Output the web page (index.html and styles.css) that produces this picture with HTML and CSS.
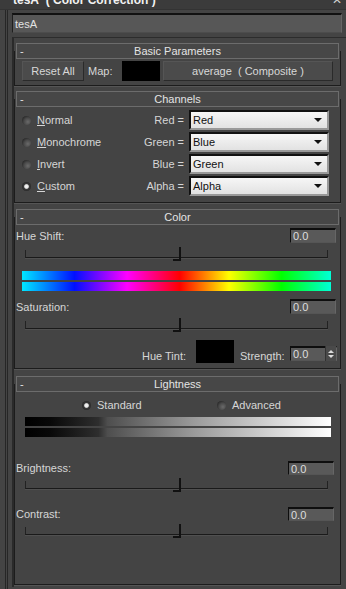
FILE: index.html
```html
<!DOCTYPE html>
<html>
<head>
<meta charset="utf-8">
<link rel="stylesheet" href="styles.css">
</head>
<body>
<div class="titlebar"><span class="title">tesA&nbsp; ( Color Correction )</span><span class="close">✕</span></div>
<div class="namefield">tesA</div>
<div class="panel">

  <div class="rollout r-basic">
    <div class="rhead"><span class="minus">-</span>Basic Parameters</div>
    <div class="basic-row">
      <div class="btn reset">Reset All</div>
      <span class="maplbl">Map:</span>
      <div class="swatch mapsw"></div>
      <div class="btn mapbtn">average&nbsp; ( Composite )</div>
    </div>
  </div>

  <div class="rollout r-chan">
    <div class="rhead"><span class="minus">-</span>Channels</div>
    <div class="chan-grid">
      <div class="radio-item"><span class="radio"></span><span><u>N</u>ormal</span></div>
      <span class="eq">Red =</span>
      <div class="dropdown"><span>Red</span><span class="arrow"></span></div>

      <div class="radio-item"><span class="radio"></span><span><u>M</u>onochrome</span></div>
      <span class="eq">Green =</span>
      <div class="dropdown"><span>Blue</span><span class="arrow"></span></div>

      <div class="radio-item"><span class="radio"></span><span><u>I</u>nvert</span></div>
      <span class="eq">Blue =</span>
      <div class="dropdown"><span>Green</span><span class="arrow"></span></div>

      <div class="radio-item"><span class="radio on"></span><span><u>C</u>ustom</span></div>
      <span class="eq">Alpha =</span>
      <div class="dropdown"><span>Alpha</span><span class="arrow"></span></div>
    </div>
  </div>

  <div class="rollout r-color">
    <div class="rhead"><span class="minus">-</span>Color</div>
    <div class="labrow first"><span>Hue Shift:</span><div class="spinner">0.0</div></div>
    <div class="slider"><span class="thumb"></span></div>
    <div class="huebars"><div class="hue"></div><div class="hue"></div></div>
    <div class="labrow sat"><span>Saturation:</span><div class="spinner">0.0</div></div>
    <div class="slider"><span class="thumb"></span></div>
    <div class="tintrow">
      <span class="tintlbl">Hue Tint:</span>
      <div class="swatch tintsw"></div>
      <span class="strlbl">Strength:</span>
      <div class="spinner small">0.0<span class="arrows"><span class="up"></span><span class="down"></span></span></div>
    </div>
  </div>

  <div class="rollout r-light">
    <div class="rhead"><span class="minus">-</span>Lightness</div>
    <div class="lradios">
      <div class="radio-item std"><span class="radio on"></span><span>Standard</span></div>
      <div class="radio-item adv"><span class="radio"></span><span>Advanced</span></div>
    </div>
    <div class="graybars"><div class="gray"></div><div class="gray"></div></div>
    <div class="labrow bright"><span>Brightness:</span><div class="spinner">0.0</div></div>
    <div class="slider ls"><span class="thumb"></span></div>
    <div class="labrow contr"><span>Contrast:</span><div class="spinner">0.0</div></div>
    <div class="slider ls"><span class="thumb"></span></div>
  </div>

</div>
</body>
</html>
```
FILE: styles.css
```css
* { box-sizing: border-box; }
html, body { margin: 0; padding: 0; }
body {
  width: 346px;
  height: 589px;
  overflow: hidden;
  background:
    linear-gradient(to right, transparent 5px, #262626 5px, #262626 6px, transparent 6px, transparent 7px, #262626 7px, #262626 8px, transparent 8px) no-repeat 0 10px / 12px 100%,
    #444444;
  font-family: "Liberation Sans", Arial, sans-serif;
  font-size: 11px;
  color: #d6d6d6;
}
.titlebar {
  height: 10px;
  overflow: hidden;
  background: #3b3b3b;
  border-bottom: 1px solid #333;
  display: flex;
  justify-content: space-between;
  padding: 0 4px 0 13px;
}
.title {
  font-weight: bold;
  font-size: 12px;
  line-height: 12px;
  margin-top: -6px;
  color: #f2f2f2;
}
.close {
  font-size: 12px;
  line-height: 12px;
  margin-top: -6px;
  color: #cfcfcf;
}
.namefield {
  margin: 3px 4px 0 12px;
  height: 20px;
  background: #575757;
  border-top: 2px solid #111;
  border-left: 1px solid #1f1f1f;
  border-right: 1px solid #666;
  border-bottom: 1px solid #4c4c4c;
  padding: 2px 0 0 2px;
  color: #e2e2e2;
  font-size: 11px;
  line-height: 14px;
}
.panel {
  margin: 4px 0 0 12px;
  border-top: 1px solid #2c2c2c;
  border-left: 2px solid #2a2a2a;
  padding: 0 4px 0 0;
  height: 550px;
  display: flow-root;
}
.rollout {
  display: flow-root;
  margin: 13px 1px 0 0;
  border-left: 1px solid #1c1c1c;
  border-right: 1px solid #1c1c1c;
  border-bottom: 1px solid #1c1c1c;
  box-shadow: 0 1px 0 #555;
}
.rhead {
  margin: -8px 1px 0 1px;
  height: 16px;
  border: 1px solid #6c6c6c;
  background: #474747;
  text-align: center;
  line-height: 14px;
  color: #e4e4e4;
  position: relative;
}
.minus {
  position: absolute;
  left: 3px;
  top: 0;
}
/* basic */
.r-basic { height: 35px; }
.basic-row {
  display: flex;
  align-items: center;
  margin: 2px 0 0 7px;
  height: 20px;
}
.btn {
  height: 20px;
  background: #4b4b4b;
  border: 1px solid #2a2a2a;
  border-top-color: #555;
  border-left-color: #555;
  text-align: center;
  line-height: 18px;
  color: #d8d8d8;
}
.reset { width: 62px; }
.maplbl { margin-left: 4px; width: 34px; }
.swatch { background: #000; }
.mapsw { width: 38px; height: 20px; }
.mapbtn { width: 170px; margin-left: 3px; }
/* channels */
.r-chan { height: 104px; }
.chan-grid {
  display: grid;
  grid-template-columns: 115px 52px 140px;
  grid-auto-rows: 20px;
  row-gap: 2px;
  margin: 3px 0 0 7px;
  align-items: center;
}
.radio-item {
  display: flex;
  align-items: center;
  gap: 6px;
}
.radio {
  width: 9px;
  height: 9px;
  border-radius: 50%;
  background: radial-gradient(circle at 65% 65%, #6a6a6a 0, #4a4a4a 45%, #262626 80%);
  flex: none;
}
.radio.on {
  background: radial-gradient(circle at 50% 50%, #f4f4f4 0, #e8e8e8 28%, #3a3a3a 45%, #222 80%);
}
.eq { text-align: right; padding-right: 5px; }
.dropdown {
  height: 20px;
  background: linear-gradient(#f6f6f6, #e2e2e2);
  border: 2px solid #111;
  border-right-color: #999;
  border-bottom-color: #999;
  color: #111;
  display: flex;
  align-items: center;
  justify-content: space-between;
  padding: 0 5px 0 2px;
}
.arrow {
  width: 0; height: 0;
  border-left: 4px solid transparent;
  border-right: 4px solid transparent;
  border-top: 4px solid #111;
}
/* color */
.r-color { height: 152px; margin-top: 14px; }
.labrow {
  display: flex;
  justify-content: space-between;
  align-items: center;
  margin: 3px 4px 0 1px;
  height: 15px;
}
.spinner {
  width: 46px;
  height: 15px;
  background: #595959;
  border-top: 2px solid #0e0e0e;
  border-left: 1px solid #0e0e0e;
  border-right: 1px solid #666;
  border-bottom: 1px solid #555;
  color: #dedede;
  line-height: 12px;
  padding-left: 2px;
  position: relative;
}
.slider {
  position: relative;
  margin: 4px 12px 0 10px;
  height: 16px;
}
.slider::before {
  content: "";
  position: absolute;
  left: 0; right: 0; top: 3px;
  height: 7px;
  border-left: 1px solid #222;
  border-right: 1px solid #222;
  border-bottom: 1px solid #1a1a1a;
  box-shadow: 0 1px 0 #505050;
}
.thumb {
  position: absolute;
  left: 148px;
  top: 0;
  width: 8px;
  height: 14px;
  border-right: 2px solid #111;
  border-bottom: 2px solid #111;
}
.huebars {
  margin: 8px 9px 0 7px;
  display: flex;
  flex-direction: column;
  gap: 2px;
}
.hue {
  height: 9px;
  background: linear-gradient(to right, #00e8ff 0%, #0010ff 17%, #ff00ff 34%, #ff0000 51%, #ffff00 67%, #00ff00 84%, #00ffd8 100%);
}
.labrow.sat { margin-top: 8px; }
.tintrow {
  display: flex;
  align-items: flex-end;
  margin: 6px 0 0 127px;
  height: 23px;
}
.tintlbl { width: 54px; margin-bottom: 1px; }
.tintsw { width: 38px; height: 23px; }
.strlbl { width: 50px; margin-left: 6px; margin-bottom: 1px; }
.spinner.small {
  width: 47px;
  margin-bottom: 2px;
}
.arrows {
  position: absolute;
  right: 0; top: -2px;
  width: 11px; height: 15px;
  background: #4a4a4a;
  border-left: 1px solid #333;
  display: flex;
  flex-direction: column;
  align-items: center;
  justify-content: center;
  gap: 2px;
}
.up, .down { width: 0; height: 0; border-left: 3px solid transparent; border-right: 3px solid transparent; }
.up { border-bottom: 3px solid #ddd; }
.down { border-top: 3px solid #ddd; }
/* lightness */
.r-light { height: 201px; margin-top: 15px; }
.lradios {
  display: flex;
  margin: 7px 0 0 67px;
  height: 12px;
  align-items: center;
}
.lradios .std { width: 135px; }
.graybars {
  margin: 6px 9px 0 10px;
  display: flex;
  flex-direction: column;
  gap: 2px;
}
.gray {
  height: 9px;
  background: linear-gradient(to right, #000 0%, #080808 8%, #2e2e2e 24%, #4e4e4e 27%, #9a9a9a 55%, #f6f6f6 96%, #fff 100%);
}
.labrow.bright { margin: 24px 6px 0 1px; height: 14px; }
.labrow.contr { margin: 13px 6px 0 1px; height: 14px; }
.labrow.bright .spinner, .labrow.contr .spinner { height: 14px; width: 46px; }
.slider.ls { margin-top: 3px; }
```
